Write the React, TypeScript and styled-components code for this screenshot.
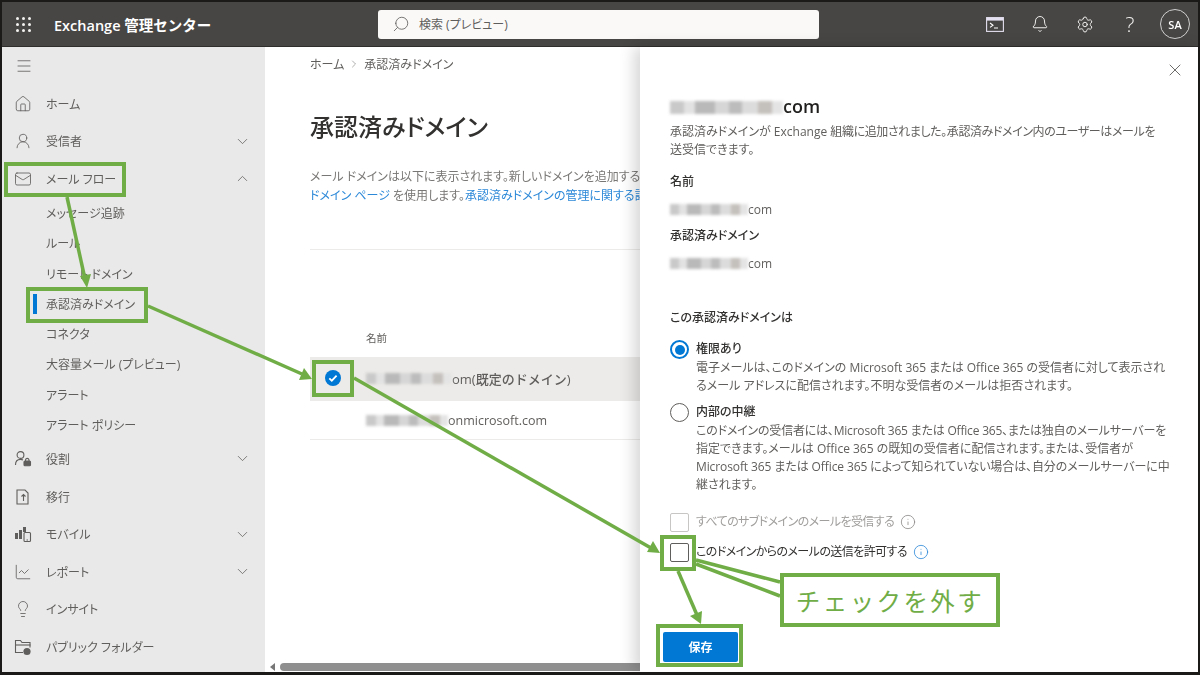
import React from "react";
import styled, { createGlobalStyle } from "styled-components";
import {
  Bell,
  ChartLine,
  ChevronDown,
  ChevronRight,
  ChevronUp,
  House,
  Info,
  Lightbulb,
  Mail,
  Menu,
  Search,
  Settings,
  UserRound,
  X,
} from "lucide-react";

const GREEN = "#70ad47";
const BLUE = "#0078d4";

const GlobalStyle = createGlobalStyle`
  html, body {
    margin: 0;
    padding: 0;
    background: #fff;
    overflow: hidden;
  }
  * {
    box-sizing: border-box;
  }
  body {
    font-family: "Open Sans", "Noto Sans CJK JP", sans-serif;
    font-feature-settings: "palt";
  }
`;

const Frame = styled.div`
  position: relative;
  width: 1200px;
  height: 675px;
  border: 2px solid #1b1a19;
  border-bottom-width: 3px;
  display: flex;
  flex-direction: column;
  overflow: hidden;
  filter: blur(0.3px);
`;

const TopBar = styled.header`
  height: 45px;
  flex: none;
  background: #484644;
  border-bottom: 1px solid #2f2e2d;
  display: flex;
  align-items: center;
  color: #fff;
`;

const Waffle = styled.div`
  width: 15px;
  height: 15px;
  margin-left: 14px;
  display: grid;
  grid-template-columns: repeat(3, 3px);
  grid-auto-rows: 3px;
  gap: 3px;
  span {
    background: #f3f2f1;
    border-radius: 50%;
  }
`;

const AppName = styled.div`
  margin-left: 23px;
  width: 324px;
  font-size: 14.5px;
  font-weight: 600;
  white-space: nowrap;
  font-feature-settings: normal;
`;

const SearchBox = styled.div`
  width: 441px;
  height: 29px;
  background: #faf9f8;
  border-radius: 3px;
  display: flex;
  align-items: center;
  padding-left: 14px;
  gap: 9px;
  color: #605e5c;
  font-size: 12px;
`;

const TopIcons = styled.div`
  margin-left: auto;
  display: flex;
  align-items: center;
  gap: 27px;
  padding-right: 8px;
`;

const TopIcon = styled.div`
  width: 18px;
  height: 18px;
  display: flex;
  align-items: center;
  justify-content: center;
  color: #f3f2f1;
`;

const Help = styled(TopIcon)`
  font-size: 21px;
  font-weight: 300;
`;

const Avatar = styled.div`
  width: 30px;
  height: 30px;
  margin-left: -6px;
  border: 1px solid #d0d0d0;
  border-radius: 50%;
  display: flex;
  align-items: center;
  justify-content: center;
  font-size: 11px;
  font-weight: 600;
`;

const Body = styled.div`
  flex: 1;
  display: flex;
  min-height: 0;
`;

const Sidebar = styled.nav`
  width: 263px;
  flex: none;
  background: #e9e9e9;
  color: #605e5c;
`;

const Toggle = styled.div`
  height: 38px;
  padding-left: 13px;
  display: flex;
  align-items: center;
  color: #605e5c;
`;

const NavRow = styled.div`
  height: 37.6px;
  padding: 0 14px 0 12px;
  display: flex;
  align-items: center;
  font-size: 12px;
`;

const NavIcon = styled.span`
  width: 18px;
  height: 18px;
  margin-right: 14px;
  display: flex;
  align-items: center;
  justify-content: center;
  color: #605e5c;
`;

const Chevron = styled.span`
  margin-left: auto;
  display: flex;
`;

const SubRow = styled.div`
  position: relative;
  height: 30.3px;
  padding-left: 44px;
  display: flex;
  align-items: center;
  font-size: 12px;
`;

const ActiveBar = styled.span`
  position: absolute;
  left: 31px;
  top: 5px;
  width: 4px;
  height: 20px;
  background: ${BLUE};
`;

const Main = styled.main`
  width: 375px;
  flex: none;
  display: flex;
  flex-direction: column;
  overflow: hidden;
  background: #fff;
`;

const MainInner = styled.div`
  padding-left: 45px;
  flex: 1;
`;

const Crumbs = styled.div`
  height: 34px;
  display: flex;
  align-items: center;
  gap: 4px;
  font-size: 12px;
  color: #605e5c;
`;

const Title = styled.h1`
  margin: 30px 0 0;
  font-size: 24px;
  line-height: 32px;
  font-weight: 500;
  color: #323130;
  white-space: nowrap;
`;

const Lead = styled.p`
  margin: 24px 0 0;
  font-size: 12px;
  line-height: 19px;
  color: #797775;
  white-space: nowrap;
`;

const LeadLink = styled.span`
  color: #2b88d8;
`;

const Rule = styled.div`
  margin-top: 44px;
  height: 1px;
  background: #edebe9;
`;

const ColumnHead = styled.div`
  margin-top: 79px;
  height: 19px;
  padding-left: 56px;
  font-size: 10.5px;
  line-height: 19px;
  color: #605e5c;
`;

const Row = styled.div<{ $selected?: boolean }>`
  height: ${(p) => (p.$selected ? 43 : 40)}px;
  margin-top: ${(p) => (p.$selected ? 9 : 0)}px;
  padding-left: 56px;
  display: flex;
  align-items: center;
  background: ${(p) => (p.$selected ? "#edebe9" : "#fff")};
  border-top: 1px solid #edebe9;
  border-bottom: 1px solid #edebe9;
  font-size: ${(p) => (p.$selected ? 13 : 12.5)}px;
  font-weight: 500;
  color: #605e5c;
  white-space: nowrap;
  font-feature-settings: normal;
`;

const Blurred = styled.span<{ $w: number; $h?: number }>`
  display: inline-block;
  flex: none;
  width: ${(p) => p.$w}px;
  height: ${(p) => p.$h ?? 11}px;
  vertical-align: -1px;
  filter: blur(1.4px);
  background: linear-gradient(
    90deg,
    #c9c9c9 0 12%,
    #e2e2e2 12% 22%,
    #b9b9b9 22% 40%,
    #d6d6d6 40% 52%,
    #bcbcbc 52% 64%,
    #dcdcdc 64% 78%,
    #c4c0bc 78% 90%,
    #e4e4e4 90% 100%
  );
`;

const Scrollbar = styled.div`
  flex: none;
  height: 10px;
  display: flex;
  align-items: center;
  padding-left: 5px;
  gap: 5px;
`;

const ScrollArrow = styled.span`
  width: 0;
  height: 0;
  border: 4px solid transparent;
  border-right: 5px solid #777;
  border-left: 0;
`;

const ScrollThumb = styled.span`
  flex: 1;
  height: 8px;
  background: #8f8f8f;
  border-radius: 4px 0 0 4px;
`;

const Panel = styled.aside`
  position: relative;
  flex: 1;
  background: #fff;
  box-shadow: -6px 0 14px rgba(0, 0, 0, 0.16);
  padding: 0 30px;
  color: #605e5c;
  font-size: 12px;
  line-height: 18px;
  white-space: nowrap;
`;

const CloseRow = styled.div`
  height: 48px;
  padding-bottom: 2px;
  margin-right: -15px;
  display: flex;
  align-items: center;
  justify-content: flex-end;
  color: #605e5c;
`;

const PanelTitle = styled.h2`
  margin: 0;
  height: 22px;
  font-size: 18px;
  line-height: 22px;
  font-weight: 600;
  color: #201f1e;
`;

const Desc = styled.p`
  margin: 6px 0 0;
`;

const Tight = styled.span<{ $s: number }>`
  letter-spacing: ${(p) => p.$s}px;
`;

const FieldLabel = styled.div<{ $gap: number }>`
  margin-top: ${(p) => p.$gap}px;
  font-weight: 500;
  color: #323130;
`;

const FieldValue = styled.div`
  margin-top: 10px;
  color: #605e5c;
  font-size: 12px;
`;

const Radio = styled.div<{ $gap: number }>`
  margin-top: ${(p) => p.$gap}px;
  display: grid;
  grid-template-columns: 20px 1fr;
  column-gap: 6px;
`;

const RadioDot = styled.span<{ $on?: boolean }>`
  width: 19px;
  height: 19px;
  border-radius: 50%;
  border: ${(p) => (p.$on ? `2px solid ${BLUE}` : "1.5px solid #605e5c")};
  display: flex;
  align-items: center;
  justify-content: center;
  &::after {
    content: "";
    display: ${(p) => (p.$on ? "block" : "none")};
    width: 10px;
    height: 10px;
    border-radius: 50%;
    background: ${BLUE};
  }
`;

const RadioLabel = styled.div`
  font-weight: 500;
  color: #323130;
`;

const RadioDesc = styled.div`
  grid-column: 2;
  color: #605e5c;
`;

const CheckRow = styled.div<{ $gap: number; $disabled?: boolean }>`
  margin-top: ${(p) => p.$gap}px;
  height: 20px;
  display: flex;
  align-items: center;
  letter-spacing: -0.58px;
  color: ${(p) => (p.$disabled ? "#a19f9d" : "#323130")};
`;

const CheckBox = styled.span<{ $disabled?: boolean }>`
  width: 19px;
  height: 19px;
  margin-right: 7px;
  border: 1px solid ${(p) => (p.$disabled ? "#c8c6c4" : "#605e5c")};
  border-radius: 2px;
`;

const InfoIcon = styled.span<{ $active?: boolean }>`
  margin-left: 6px;
  display: flex;
  color: ${(p) => (p.$active ? "#2b88d8" : "#8a8886")};
`;

const SaveButton = styled.button`
  display: block;
  margin: 70px 0 0 -7px;
  width: 75px;
  height: 30px;
  border: 0;
  border-radius: 2px;
  background: ${BLUE};
  color: #fff;
  font: 600 12px "Open Sans", "Noto Sans CJK JP", sans-serif;
`;

const Arrows = styled.svg`
  position: absolute;
  left: -2px;
  top: -2px;
  width: 1200px;
  height: 675px;
  pointer-events: none;
`;

const Highlight = styled.div<{ $x: number; $y: number; $w: number; $h: number }>`
  position: absolute;
  left: ${(p) => p.$x - 2}px;
  top: ${(p) => p.$y - 2}px;
  width: ${(p) => p.$w}px;
  height: ${(p) => p.$h}px;
  border: 4px solid ${GREEN};
  pointer-events: none;
`;

const Callout = styled.div`
  position: absolute;
  left: 778px;
  top: 571px;
  width: 220px;
  height: 54px;
  border: 4px solid ${GREEN};
  background: #fff;
  color: ${GREEN};
  font-size: 24.5px;
  letter-spacing: 2.4px;
  font-feature-settings: normal;
  display: flex;
  align-items: center;
  justify-content: center;
  white-space: nowrap;
`;

const CheckCircle = styled.span`
  position: absolute;
  left: 323px;
  top: 368px;
  width: 16px;
  height: 16px;
  display: flex;
`;

function Icon({ children }: { children: React.ReactNode }) {
  return (
    <svg width="18" height="18" viewBox="0 0 18 18" fill="none" stroke="currentColor" strokeWidth="1.1">
      {children}
    </svg>
  );
}

const RolesIcon = () => (
  <Icon>
    <circle cx="6.5" cy="5" r="3.4" />
    <path d="M1.5 15c0-3.4 2-5.6 5-5.6 1 0 1.8.2 2.5.6" />
    <rect x="10" y="11" width="6.5" height="4.8" rx="1" fill="currentColor" />
    <path d="M11.5 11V9.8a1.8 1.8 0 0 1 3.5 0V11" />
  </Icon>
);

const MigrateIcon = () => (
  <Icon>
    <path d="M11 2H3v14h11V5z" />
    <path d="M9.5 13V6.5M7.5 8.5l2-2 2 2" />
  </Icon>
);

const MobileIcon = () => (
  <Icon>
    <rect x="1" y="8" width="3" height="6" fill="currentColor" stroke="none" />
    <rect x="5" y="5" width="3" height="9" fill="currentColor" stroke="none" />
    <rect x="9" y="2" width="3" height="5" fill="currentColor" stroke="none" />
    <rect x="10" y="7.5" width="6.5" height="9" rx="1" />
    <path d="M12.5 15h1.5" />
  </Icon>
);

const FolderIcon = () => (
  <Icon>
    <path d="M9 14.5H1.5v-12h5l1.5 2h8v5" />
    <path d="M1.5 7h15" />
    <circle cx="13" cy="13.5" r="3.6" fill="currentColor" stroke="none" />
  </Icon>
);

const TerminalIcon = () => (
  <svg width="18" height="15" viewBox="0 0 18 15" fill="none">
    <rect x="0.6" y="0.6" width="16.8" height="13.8" stroke="#e3dff0" strokeWidth="1.1" />
    <rect x="1" y="1" width="16" height="2.6" fill="#e3dff0" />
    <path d="M4 6l3 2.2L4 10.4M8 11h4" stroke="#fff" strokeWidth="1.1" />
  </svg>
);

const NAV_ICON = { size: 18, strokeWidth: 1.1 };
const CHEV = { size: 17, strokeWidth: 1.1 };

const subItems = [
  "メッセージ追跡",
  "ルール",
  "リモート ドメイン",
  "承認済みドメイン",
  "コネクタ",
  "大容量メール (プレビュー)",
  "アラート",
  "アラート ポリシー",
];

const lowerItems: { label: string; icon: React.ReactNode; more?: boolean }[] = [
  { label: "役割", icon: <RolesIcon />, more: true },
  { label: "移行", icon: <MigrateIcon /> },
  { label: "モバイル", icon: <MobileIcon />, more: true },
  { label: "レポート", icon: <ChartLine {...NAV_ICON} />, more: true },
  { label: "インサイト", icon: <Lightbulb {...NAV_ICON} /> },
  { label: "パブリック フォルダー", icon: <FolderIcon /> },
];

function ArrowLine({ d }: { d: string }) {
  return <path d={d} stroke={GREEN} strokeWidth="3.5" fill="none" />;
}

export default function App() {
  return (
    <>
      <GlobalStyle />
      <Frame>
        <TopBar>
          <Waffle>
            {Array.from({ length: 9 }).map((_, i) => (
              <span key={i} />
            ))}
          </Waffle>
          <AppName>Exchange 管理センター</AppName>
          <SearchBox>
            <Search size={18} strokeWidth={1.1} style={{ transform: "scaleX(-1)" }} />
            検索 (プレビュー)
          </SearchBox>
          <TopIcons>
            <TopIcon>
              <TerminalIcon />
            </TopIcon>
            <TopIcon>
              <Bell size={18} strokeWidth={1.3} />
            </TopIcon>
            <TopIcon>
              <Settings size={19} strokeWidth={1.3} />
            </TopIcon>
            <Help>?</Help>
            <Avatar>SA</Avatar>
          </TopIcons>
        </TopBar>
        <Body>
          <Sidebar>
            <Toggle>
              <Menu size={18} strokeWidth={1.1} />
            </Toggle>
            <NavRow>
              <NavIcon>
                <House {...NAV_ICON} />
              </NavIcon>
              ホーム
            </NavRow>
            <NavRow>
              <NavIcon>
                <UserRound {...NAV_ICON} />
              </NavIcon>
              受信者
              <Chevron>
                <ChevronDown {...CHEV} />
              </Chevron>
            </NavRow>
            <NavRow>
              <NavIcon>
                <Mail {...NAV_ICON} />
              </NavIcon>
              メール フロー
              <Chevron>
                <ChevronUp {...CHEV} />
              </Chevron>
            </NavRow>
            {subItems.map((item, i) => (
              <SubRow key={item}>
                {i === 3 && <ActiveBar />}
                {item}
              </SubRow>
            ))}
            {lowerItems.map((item) => (
              <NavRow key={item.label}>
                <NavIcon>{item.icon}</NavIcon>
                {item.label}
                {item.more && (
                  <Chevron>
                    <ChevronDown {...CHEV} />
                  </Chevron>
                )}
              </NavRow>
            ))}
          </Sidebar>
          <Main>
            <MainInner>
              <Crumbs>
                ホーム
                <ChevronRight size={12} strokeWidth={1} />
                承認済みドメイン
              </Crumbs>
              <Title>承認済みドメイン</Title>
              <Lead>
                メール ドメインは以下に表示されます。新しいドメインを追加するには
                <br />
                <LeadLink>ドメイン ページ</LeadLink> を使用します。
                <LeadLink>承認済みドメインの管理に関する詳細情報</LeadLink>
              </Lead>
              <Rule />
              <ColumnHead>名前</ColumnHead>
              <Row $selected>
                <Blurred $w={86} />
                om(既定のドメイン)
              </Row>
              <Row>
                <Blurred $w={82} />
                onmicrosoft.com
              </Row>
            </MainInner>
            <Scrollbar>
              <ScrollArrow />
              <ScrollThumb />
            </Scrollbar>
          </Main>
          <Panel>
            <CloseRow>
              <X size={20} strokeWidth={1.1} />
            </CloseRow>
            <PanelTitle>
              <Blurred $w={113} $h={13} />
              com
            </PanelTitle>
            <Desc>
              承認済みドメインが Exchange{" "}
              <Tight $s={-0.4}>組織に追加されました。承認済みドメイン内のユーザーはメールを</Tight>
              <br />
              送受信できます。
            </Desc>
            <FieldLabel $gap={14}>名前</FieldLabel>
            <FieldValue>
              <Blurred $w={78} />
              com
            </FieldValue>
            <FieldLabel $gap={8}>承認済みドメイン</FieldLabel>
            <FieldValue>
              <Blurred $w={78} />
              com
            </FieldValue>
            <FieldLabel $gap={36}>この承認済みドメインは</FieldLabel>
            <Radio $gap={13}>
              <RadioDot $on />
              <RadioLabel>権限あり</RadioLabel>
              <RadioDesc>
                電子メールは、このドメインの Microsoft 365 または Office 365 の受信者に対して表示され
                <br />
                るメール アドレスに配信されます。不明な受信者のメールは拒否されます。
              </RadioDesc>
            </Radio>
            <Radio $gap={8}>
              <RadioDot />
              <RadioLabel>内部の中継</RadioLabel>
              <RadioDesc>
                <Tight $s={-0.2}>このドメインの受信者には、Microsoft 365 または Office 365、または独自のメールサーバーを</Tight>
                <br />
                指定できます。メールは Office 365 の既知の受信者に配信されます。または、受信者が
                <br />
                <Tight $s={-0.1}>Microsoft 365 または Office 365 によって知られていない場合は、自分のメールサーバーに中</Tight>
                <br />
                継されます。
              </RadioDesc>
            </Radio>
            <CheckRow $gap={18} $disabled>
              <CheckBox $disabled />
              すべてのサブドメインのメールを受信する
              <InfoIcon>
                <Info size={16} strokeWidth={1.2} />
              </InfoIcon>
            </CheckRow>
            <CheckRow $gap={10}>
              <CheckBox />
              このドメインからのメールの送信を許可する
              <InfoIcon $active>
                <Info size={16} strokeWidth={1.2} />
              </InfoIcon>
            </CheckRow>
            <SaveButton>保存</SaveButton>
          </Panel>
        </Body>

        <CheckCircle>
          <svg width="16" height="16" viewBox="0 0 16 16">
            <circle cx="8" cy="8" r="8" fill={BLUE} />
            <path d="M4.3 8.3l2.5 2.4 4.8-5" stroke="#fff" strokeWidth="1.8" fill="none" />
          </svg>
        </CheckCircle>

        <Arrows viewBox="0 0 1200 675">
          <ArrowLine d="M67 197L85 279" />
          <polygon points="87,288 80,276 91,274" fill={GREEN} />
          <ArrowLine d="M148 306L302 374" />
          <polygon points="312,379 299,380 304,368" fill={GREEN} />
          <ArrowLine d="M354 378L651 548" />
          <polygon points="660,553 647,552 653,541" fill={GREEN} />
          <ArrowLine d="M678 571L697 615" />
          <polygon points="701,624 690,616 702,611" fill={GREEN} />
          <path d="M696 560L780 582M696 564L780 596" stroke={GREEN} strokeWidth="3.5" fill="none" />
        </Arrows>

        <Highlight $x={4} $y={162} $w={122} $h={35} />
        <Highlight $x={26} $y={287} $w={122} $h={36} />
        <Highlight $x={312} $y={360} $w={42} $h={37} />
        <Highlight $x={660} $y={535} $w={36} $h={36} />
        <Highlight $x={656} $y={624} $w={87} $h={43} />
        <Callout>チェックを外す</Callout>
      </Frame>
    </>
  );
}
